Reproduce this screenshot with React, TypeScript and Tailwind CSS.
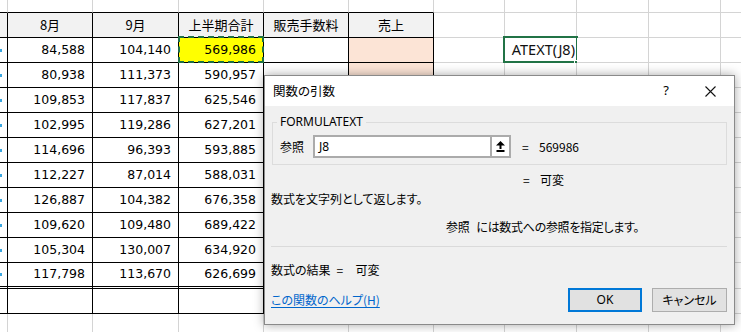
import React from "react";

const m8 = ["84,588", "80,938", "109,853", "102,995", "114,696", "112,227", "126,887", "109,620", "105,304", "117,798"];
const m9 = ["104,140", "111,373", "117,837", "119,286", "96,393", "87,014", "104,382", "109,480", "130,007", "113,670"];
const tot = ["569,986", "590,957", "625,546", "627,201", "593,885", "588,031", "676,358", "689,422", "634,920", "626,699"];
const headers = ["", "8月", "9月", "上半期合計", "販売手数料", "売上"];

const jp = "font-['Noto_Sans_CJK_JP','Noto_Sans',sans-serif] [font-feature-settings:'palt']";

function Cell({ r, c }: { r: number; c: number }) {
  const inTable = c <= 5 && r >= 1 && r <= 12;
  const rightCls = c === 10 ? "border-r-0" : inTable ? "border-r-black" : "border-r-[#d4d4d4]";
  let bottomCls = "";
  if (r === 13) bottomCls = "border-b-0";
  else if (c <= 5 && r === 11) bottomCls = "border-b-[3px] border-b-black border-double";
  else if (c <= 5 && r <= 12) bottomCls = "border-b-black";
  else bottomCls = "border-b-[#d4d4d4]";

  let bg = "bg-white";
  if (r === 1 && c <= 5) bg = "bg-[#f2f2f2]";
  if (c === 5 && r >= 2 && r <= 11) bg = "bg-[#fce4d6]";
  if (c === 3 && r === 2) bg = "bg-[#ffff00]";

  let content: React.ReactNode = null;
  let align = "justify-end pr-[7px]";
  if (r === 1 && c >= 1 && c <= 5) {
    content = <span className={`${jp} text-[13px] text-black`}>{headers[c]}</span>;
    align = "justify-center";
  } else if (r >= 2 && r <= 11 && c >= 1 && c <= 3) {
    const v = c === 1 ? m8[r - 2] : c === 2 ? m9[r - 2] : tot[r - 2];
    content = <span className="font-['DejaVu_Sans',sans-serif] text-[12.5px] text-black leading-none">{v}</span>;
  } else if (r >= 2 && r <= 11 && c === 0) {
    content = <span className="block w-[2px] h-[3px] bg-[#3aa6e0]" />;
    align = "justify-start";
  }

  return (
    <div className={`relative flex items-center overflow-visible border-r border-b ${rightCls} ${bottomCls} ${bg} ${align}`}>
      {content}
      {c === 3 && r === 2 && (
        <div className="absolute left-[-1px] top-[-2px] right-[-1px] bottom-[-1px] border-2 border-dashed border-[#1e7145]" />
      )}
      {c === 7 && r === 2 && (
        <>
          <div className="absolute left-[-2px] top-[-2px] right-[-2px] bottom-[-1px] border-2 border-[#217346] flex items-center justify-end pr-[1px] overflow-hidden">
            <span className="font-['Noto_Sans',sans-serif] text-[14.5px] text-[#111] whitespace-nowrap">ATEXT(J8)</span>
          </div>
          <div className="absolute right-[-3px] bottom-[-3px] w-[5px] h-[5px] bg-[#217346] border border-white" />
        </>
      )}
    </div>
  );
}

function UpArrow() {
  return (
    <svg width="9" height="11" viewBox="0 0 9 11">
      <path d="M4.5 0 L9 4.5 H5.5 V8 H3.5 V4.5 H0 Z" fill="#000" />
      <rect x="0.5" y="9" width="8" height="2" fill="#000" />
    </svg>
  );
}

function Dialog() {
  return (
    <div className={`absolute left-[264px] top-[75px] w-[471px] h-[250px] flex flex-col border border-[#8a8a8a] bg-[#f0f0f0] shadow-[0_0_10px_rgba(0,0,0,0.35)] ${jp} text-[12px] text-black`}>
      <div className="h-[30px] bg-white flex items-center pl-[8px] shrink-0">
        <span className="flex-1 text-[12.5px]">関数の引数</span>
        <span className="w-[20px] mr-[10px] text-center text-[13px] font-['Noto_Sans',sans-serif]">?</span>
        <div className="w-[48px] flex justify-center">
          <svg width="11" height="11" viewBox="0 0 11 11">
            <path d="M0.5 0.5 L10.5 10.5 M10.5 0.5 L0.5 10.5" stroke="#111" strokeWidth="1.1" />
          </svg>
        </div>
      </div>
      <div className="flex-1 flex flex-col px-[7px] pt-[9px]">
        <fieldset className="border border-[#dcdcdc] h-[50px] px-[7px] pb-[5px]">
          <legend className="px-[3px] ml-[-3px] text-[12px] font-['Noto_Sans',sans-serif] leading-[14px]">FORMULATEXT</legend>
          <div className="flex items-center mt-[6px] h-[23px]">
            <span className="w-[33px]">参照</span>
            <div className="w-[198px] h-[23px] border-2 border-[#ababab] bg-white flex items-center">
              <span className="flex-1 pl-[4px] text-[12px] font-['Noto_Sans',sans-serif]">J8</span>
              <div className="w-[19px] h-[19px] border-l-2 border-[#ababab] bg-white flex items-center justify-center">
                <UpArrow />
              </div>
            </div>
            <span className="ml-[11px] w-[17px]">=</span>
            <span>569986</span>
          </div>
        </fieldset>
        <div className="flex h-[16px] mt-[6px]">
          <span className="ml-[251px] w-[17px]">=</span>
          <span>可変</span>
        </div>
        <div className="h-[16px] mt-[3px] ml-[-1px]">数式を文字列として返します。</div>
        <div className="h-[16px] mt-[12px] ml-[174px] tracking-[-0.3px]">
          参照<span className="ml-[7px]">には数式への参照を指定します。</span>
        </div>
        <div className="h-px bg-[#dadada] mt-[12px] ml-[-1px]" />
        <div className="h-[16px] mt-[14px] ml-[-1px] flex">
          <span>数式の結果</span>
          <span className="ml-[6px] w-[19px]">=</span>
          <span>可変</span>
        </div>
        <div className="flex items-center mt-[11px] h-[24px]">
          <span className="flex-1 ml-[-1px] text-[#0066cc] underline underline-offset-2">この関数のヘルプ(H)</span>
          <div className="w-[74px] h-[24px] border-2 border-[#0078d7] bg-[#e1e1e1] flex items-center justify-center font-['Noto_Sans',sans-serif]">OK</div>
          <div className="w-[75px] h-[24px] ml-[10px] border border-[#adadad] bg-[#e1e1e1] flex items-center justify-center">キャンセル</div>
        </div>
      </div>
    </div>
  );
}

export default function App() {
  const rows = Array.from({ length: 14 }, (_, r) => r);
  const cols = Array.from({ length: 11 }, (_, c) => c);
  return (
    <div className="relative w-[741px] h-[332px] overflow-hidden bg-white">
      <div className="grid grid-cols-[8px_85px_86px_85px_85px_85px_71px_72px_72px_72px_1fr] grid-rows-[13px_25px_repeat(9,25px)_26px_25px_25px]">
        {rows.map((r) => cols.map((c) => <Cell key={`${r}-${c}`} r={r} c={c} />))}
      </div>
      <Dialog />
    </div>
  );
}
